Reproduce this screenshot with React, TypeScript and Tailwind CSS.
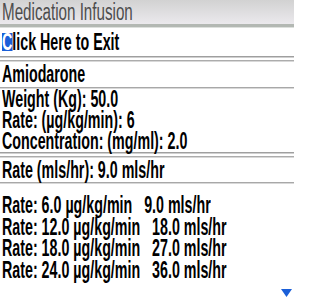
import React from "react";

const font = { fontFamily: "'Liberation Sans', Arial, sans-serif" };

const rates = [
  { dose: "6.0", flow: "9.0" },
  { dose: "12.0", flow: "18.0" },
  { dose: "18.0", flow: "27.0" },
  { dose: "24.0", flow: "36.0" },
];

function Row({ h, children }: { h: string; children: React.ReactNode }) {
  return (
    <div className={`flex items-center pl-[2px] ${h}`}>
      <span className="inline-block origin-left scale-x-[0.62] whitespace-pre font-bold text-[23px] leading-[21px] text-black">
        {children}
      </span>
    </div>
  );
}

function Double() {
  return (
    <div className="flex flex-col">
      <div className="h-px bg-[#9f9f9f]" />
      <div className="h-px bg-[#d0d0d0]" />
      <div className="h-[2px] bg-white" />
      <div className="h-px bg-[#acacac]" />
      <div className="h-px bg-[#d8d8d8]" />
    </div>
  );
}

export default function App() {
  return (
    <div className="w-[294px] h-[300px] overflow-hidden bg-white relative" style={font}>
      {/* title bar */}
      <div className="h-[24px] flex items-center pl-[2px] bg-gradient-to-b from-[#d2d2d2] to-[#ebe9ed]">
        <span className="inline-block origin-left scale-x-[0.66] whitespace-pre text-[23px] leading-[21px] text-[#4d4d4d]">
          Medication Infusion
        </span>
      </div>
      <div className="h-[3px] bg-[#b3b8b3]" />
      <div className="h-px bg-[#dde0dd]" />

      <Row h="h-[28px]">
        <span className="inline-block bg-[#1a5fd8] text-white h-[18px] leading-[18px]">C</span>
        lick Here to Exit
      </Row>
      <Double />

      <Row h="h-[25px]">Amiodarone</Row>
      <div className="h-px bg-[#a8a8a8]" />
      <div className="h-px bg-[#d8d8d8]" />

      <Row h="h-[21px]">Weight (Kg): 50.0</Row>
      <Row h="h-[21px]">Rate: (µg/kg/min): 6</Row>
      <Row h="h-[21px]">Concentration: (mg/ml): 2.0</Row>
      <Double />

      <Row h="h-[24px]">Rate (mls/hr): 9.0 mls/hr</Row>
      <div className="h-px bg-[#a8a8a8]" />
      <div className="h-px bg-[#d8d8d8]" />
      <div className="h-[11px]" />

      {rates.map((r) => (
        <Row key={r.dose} h="h-[21.5px]">
          {`Rate: ${r.dose} µg/kg/min   ${r.flow} mls/hr`}
        </Row>
      ))}

      <div className="absolute right-[2px] bottom-[3px]">
        <svg width="11" height="8" viewBox="0 0 11 8">
          <path d="M0 0H11L5.5 8Z" fill="#1a5fd8" />
        </svg>
      </div>
    </div>
  );
}
